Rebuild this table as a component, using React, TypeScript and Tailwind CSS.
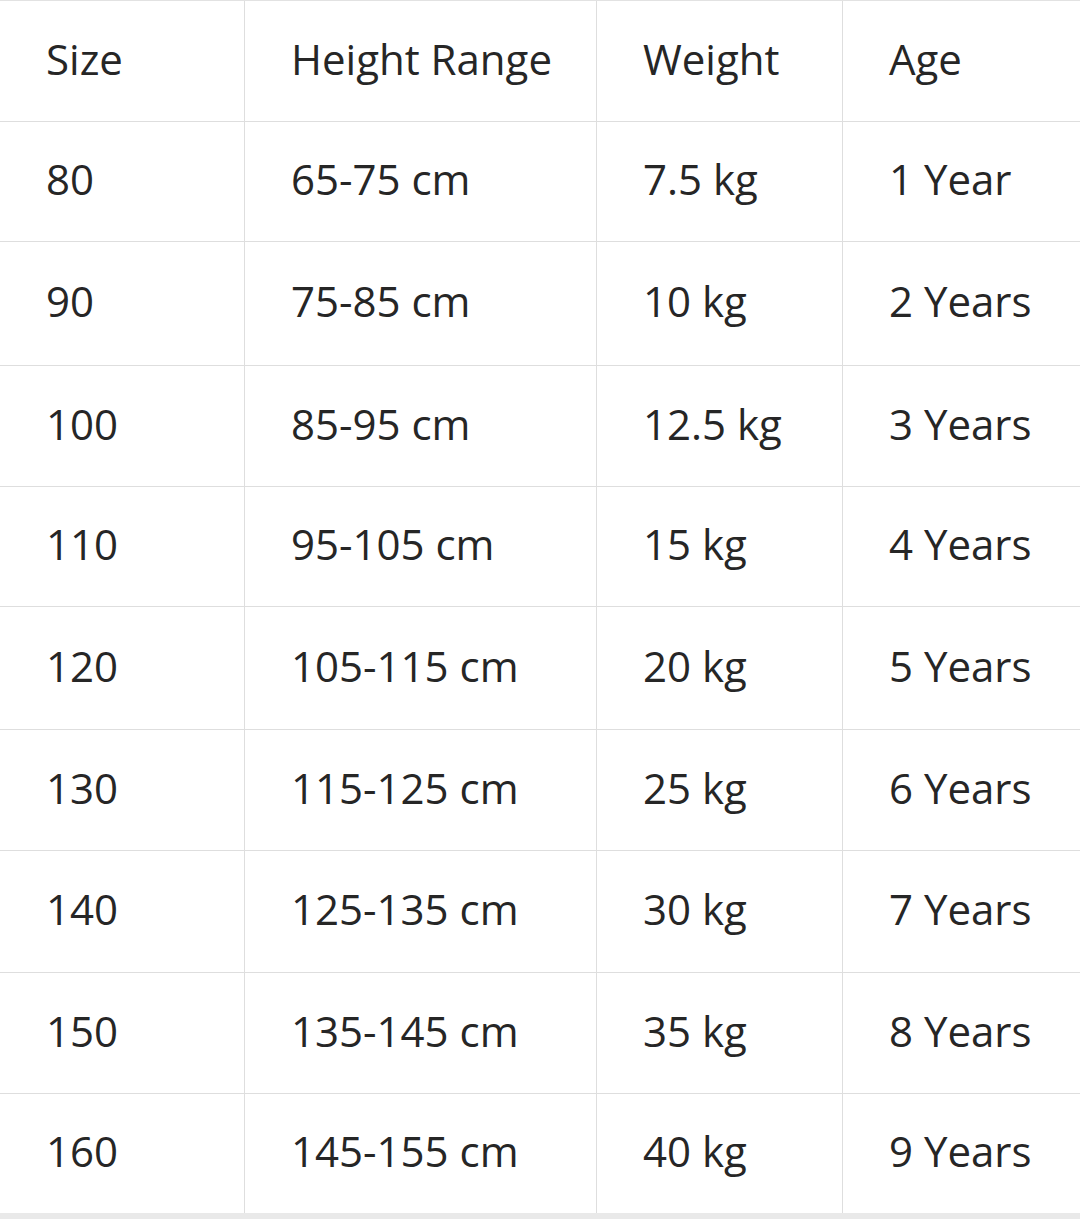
const rows = [
  ["80", "65-75 cm", "7.5 kg", "1 Year"],
  ["90", "75-85 cm", "10 kg", "2 Years"],
  ["100", "85-95 cm", "12.5 kg", "3 Years"],
  ["110", "95-105 cm", "15 kg", "4 Years"],
  ["120", "105-115 cm", "20 kg", "5 Years"],
  ["130", "115-125 cm", "25 kg", "6 Years"],
  ["140", "125-135 cm", "30 kg", "7 Years"],
  ["150", "135-145 cm", "35 kg", "8 Years"],
  ["160", "145-155 cm", "40 kg", "9 Years"],
];

// row heights read off the screenshot, the lines are not perfectly even
const heights = [
  "h-[121px]",
  "h-[120px]",
  "h-[124px]",
  "h-[121px]",
  "h-[120px]",
  "h-[123px]",
  "h-[121px]",
  "h-[122px]",
  "h-[121px]",
  "h-[119px]",
];

const cols = ["w-[245px]", "w-[352px]", "w-[246px]", "flex-1"];

const Row = ({ cells, h, last }: { cells: string[]; h: string; last?: boolean }) => (
  <div className={`flex ${h} ${last ? "" : "border-b border-[#dedede]"}`}>
    {cells.map((c, i) => (
      <div
        key={i}
        className={`${cols[i]} flex items-center pl-[46px] pb-[6px] ${i < 3 ? "border-r border-[#dedede]" : ""}`}
      >
        {c}
      </div>
    ))}
  </div>
);

export default function App() {
  return (
    <div
      className="w-[1080px] h-[1219px] bg-[#e9e9e9] text-[#262626] text-[42px]"
      style={{ fontFamily: '"Open Sans", "Noto Sans", sans-serif' }}
    >
      <div className="bg-white border-t border-[#e2e2e2]">
        <Row cells={["Size", "Height Range", "Weight", "Age"]} h={heights[0]} />
        {rows.map((r, i) => (
          <Row key={i} cells={r} h={heights[i + 1]} last={i === rows.length - 1} />
        ))}
      </div>
    </div>
  );
}
